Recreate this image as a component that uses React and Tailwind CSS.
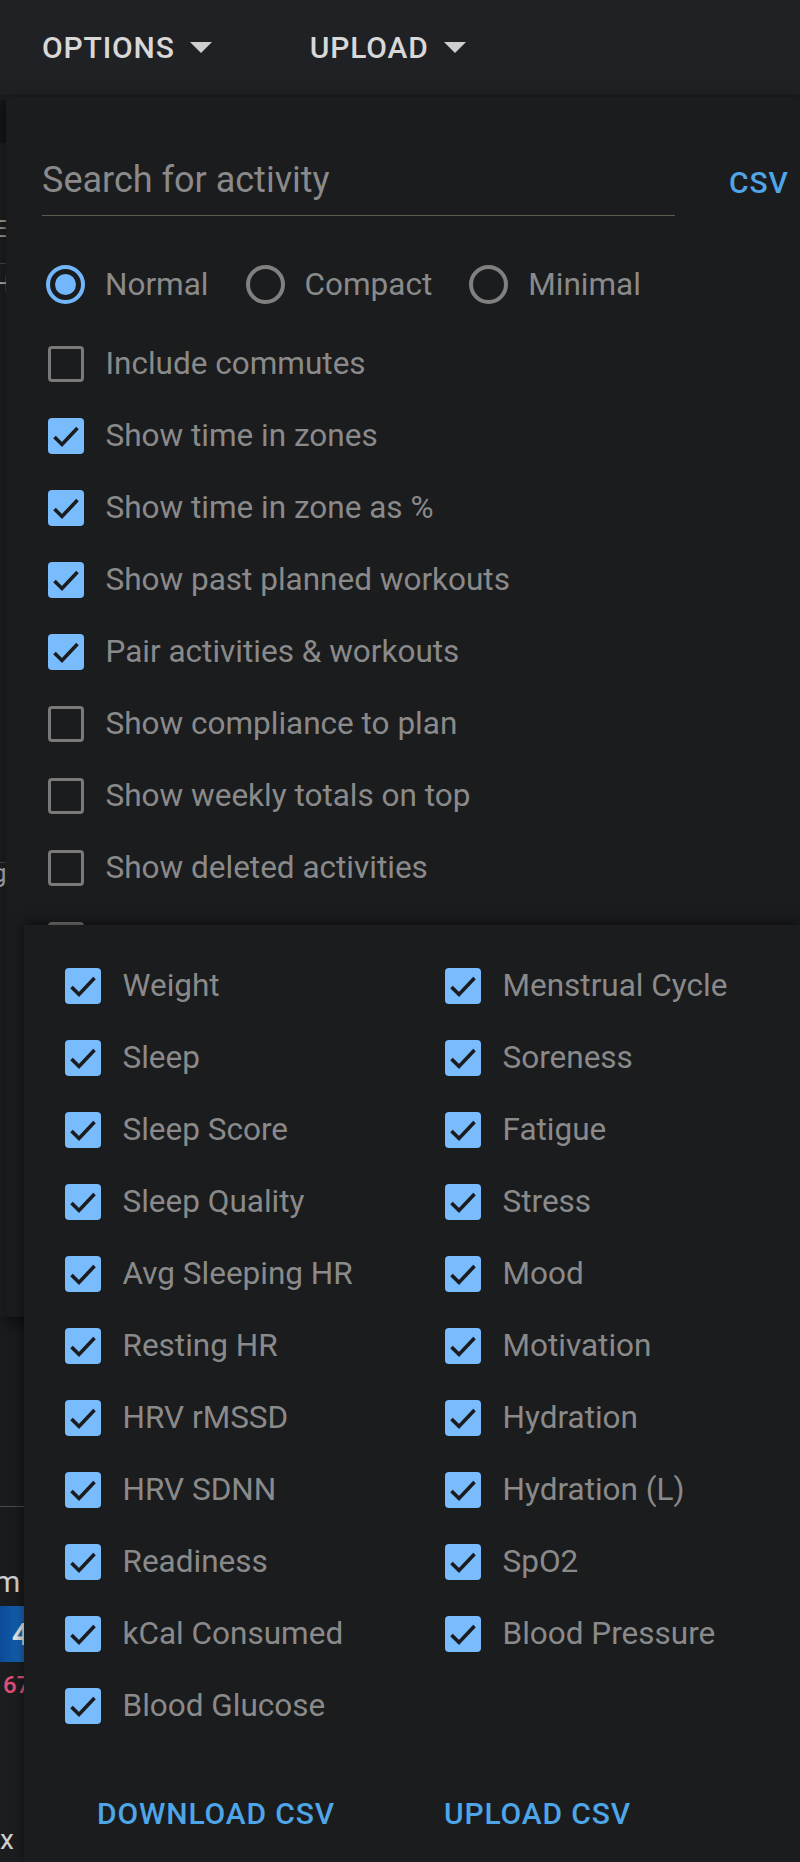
import React from "react";

const optionRows = [
  { label: "Include commutes", checked: false },
  { label: "Show time in zones", checked: true },
  { label: "Show time in zone as %", checked: true },
  { label: "Show past planned workouts", checked: true },
  { label: "Pair activities & workouts", checked: true },
  { label: "Show compliance to plan", checked: false },
  { label: "Show weekly totals on top", checked: false },
  { label: "Show deleted activities", checked: false },
  { label: "Show notes", checked: false },
];

const leftFields = [
  "Weight",
  "Sleep",
  "Sleep Score",
  "Sleep Quality",
  "Avg Sleeping HR",
  "Resting HR",
  "HRV rMSSD",
  "HRV SDNN",
  "Readiness",
  "kCal Consumed",
  "Blood Glucose",
];

const rightFields = [
  "Menstrual Cycle",
  "Soreness",
  "Fatigue",
  "Stress",
  "Mood",
  "Motivation",
  "Hydration",
  "Hydration (L)",
  "SpO2",
  "Blood Pressure",
];

function Checkbox({ checked }) {
  if (checked) {
    return (
      <span className="flex h-[36px] w-[36px] shrink-0 items-center justify-center rounded-[4px] bg-[#79bcfe]">
        <svg width="36" height="36" viewBox="0 0 36 36">
          <polyline
            points="6.5,19 14,26.5 29.5,10"
            fill="none"
            stroke="#1b1c1e"
            strokeWidth="3.6"
          />
        </svg>
      </span>
    );
  }
  return (
    <span className="h-[36px] w-[36px] shrink-0 rounded-[4px] border-[3.5px] border-[#7a7a7a]" />
  );
}

function Radio({ checked }) {
  return (
    <span
      className={`flex h-[39px] w-[39px] shrink-0 items-center justify-center rounded-full border-[4px] ${
        checked ? "border-[#72b7fc]" : "border-[#808080]"
      }`}
    >
      {checked && <span className="h-[21px] w-[21px] rounded-full bg-[#72b7fc]" />}
    </span>
  );
}

function Caret() {
  return (
    <svg width="22" height="11" viewBox="0 0 10 5">
      <path d="M0 0 L5 5 L10 0z" fill="#cfcfcf" />
    </svg>
  );
}

function CheckRow({ label, checked }) {
  return (
    <div className="flex h-[72px] items-center gap-[21.5px]">
      <Checkbox checked={checked} />
      <span className="whitespace-nowrap text-[31.5px] leading-[36px] text-[#8a8a8a]">
        {label}
      </span>
    </div>
  );
}

export default function App() {
  return (
    <div className="relative h-[1862px] w-[800px] overflow-hidden bg-[#1c1d1f] font-['Roboto',sans-serif]">
      {/* Top bar */}
      <header className="flex h-[95px] items-center bg-[#202124] pl-[42px]">
        <button className="flex items-center gap-[15px] text-[30px] font-medium uppercase leading-[36px] tracking-[0.86px] text-[#d8d8d8]">
          Options
          <Caret />
        </button>
        <button className="ml-[98px] flex items-center gap-[15px] text-[30px] font-medium uppercase leading-[36px] tracking-[0.86px] text-[#d8d8d8]">
          Upload
          <Caret />
        </button>
      </header>

      {/* Page behind the menus */}
      <div className="w-[24px] overflow-hidden">
        <div className="mt-[5px] h-[43px] bg-[#151618]" />
        <div className="flex h-[120px] items-end bg-[#1f2022] pb-[22px]">
          <span className="-ml-[6px] text-[24px] leading-[24px] text-[#a8a294]">E</span>
        </div>
        <div className="h-px bg-[#4b4b4b]" />
        <div className="h-[598px] bg-[#1f2022] pt-[8px]">
          <span className="-ml-[7px] block text-[24px] leading-[24px] text-[#bdbdbd]">H</span>
        </div>
        <div className="h-px bg-[#4b4b4b]" />
        <div className="h-[454px] bg-[#1f2022]">
          <span className="-ml-[8px] block text-[26px] leading-[20px] text-[#bdbdbd]">g</span>
        </div>
        <div className="h-[189px] bg-[#1a1b1d]" />
        <div className="h-px bg-[#4b4b4b]" />
        <div className="flex h-[99px] items-end bg-[#1a1b1d] pb-[12px]">
          <span className="-ml-[6px] text-[30px] leading-[24px] text-[#d0d0d0]">m</span>
        </div>
        <div className="flex h-[56px] items-center justify-end bg-gradient-to-r from-[#0b4a96] to-[#1766b8]">
          <span className="-mr-[6px] text-[32px] font-bold text-[#e6e6e6]">4</span>
        </div>
        <div className="flex h-[46px] items-center">
          <span className="ml-[3px] text-[24px] font-medium text-[#e0507a]">67</span>
        </div>
        <div className="h-[120px]" />
        <span className="block text-[28px] leading-[24px] text-[#cfcfcf]">x</span>
      </div>

      {/* Options menu */}
      <div className="absolute left-[6px] right-0 top-[97px] h-[1220px] rounded-[4px] bg-[#1b1c1e] pl-[36px] pt-[62px] shadow-[0_4px_16px_rgba(0,0,0,0.6)]">
        <div className="flex items-start">
          <div className="w-[633px] border-b border-[#5d5a52] pb-[14px]">
            <input
              type="text"
              placeholder="Search for activity"
              className="h-[42px] w-full bg-transparent text-[36px] leading-[42px] text-[#d0d0d0] outline-none placeholder:text-[#8a8a8a]"
            />
          </div>
          <button className="ml-[54px] mt-[6px] text-[30px] font-medium leading-[36px] tracking-[0.86px] text-[#4ea6e8]">
            CSV
          </button>
        </div>

        <div className="ml-[4px] mt-[49px] flex h-[39px] items-center gap-[37px]">
          {[
            ["Normal", true],
            ["Compact", false],
            ["Minimal", false],
          ].map(([label, checked]) => (
            <label key={label} className="flex items-center gap-[20px]">
              <Radio checked={checked} />
              <span className="text-[31.5px] leading-[36px] text-[#8a8a8a]">{label}</span>
            </label>
          ))}
        </div>

        <div className="ml-[6px] mt-[24px]">
          {optionRows.map((row) => (
            <CheckRow key={row.label} label={row.label} checked={row.checked} />
          ))}
        </div>
      </div>

      {/* Wellness fields menu */}
      <div className="absolute bottom-0 left-[24px] right-0 top-[925px] bg-[#1b1c1e] pl-[41px] pt-[25px] shadow-[0_-2px_12px_rgba(0,0,0,0.55)]">
        <div className="grid grid-cols-[380px_1fr]">
          <div>
            {leftFields.map((f) => (
              <CheckRow key={f} label={f} checked />
            ))}
          </div>
          <div>
            {rightFields.map((f) => (
              <CheckRow key={f} label={f} checked />
            ))}
          </div>
        </div>
        <div className="mt-[54px] grid grid-cols-[380px_1fr]">
          <button className="pl-[32px] text-left text-[30px] font-medium leading-[36px] tracking-[0.86px] text-[#4ea6e8]">
            DOWNLOAD CSV
          </button>
          <button className="-ml-[1px] text-left text-[30px] font-medium leading-[36px] tracking-[0.86px] text-[#4ea6e8]">
            UPLOAD CSV
          </button>
        </div>
      </div>
    </div>
  );
}
